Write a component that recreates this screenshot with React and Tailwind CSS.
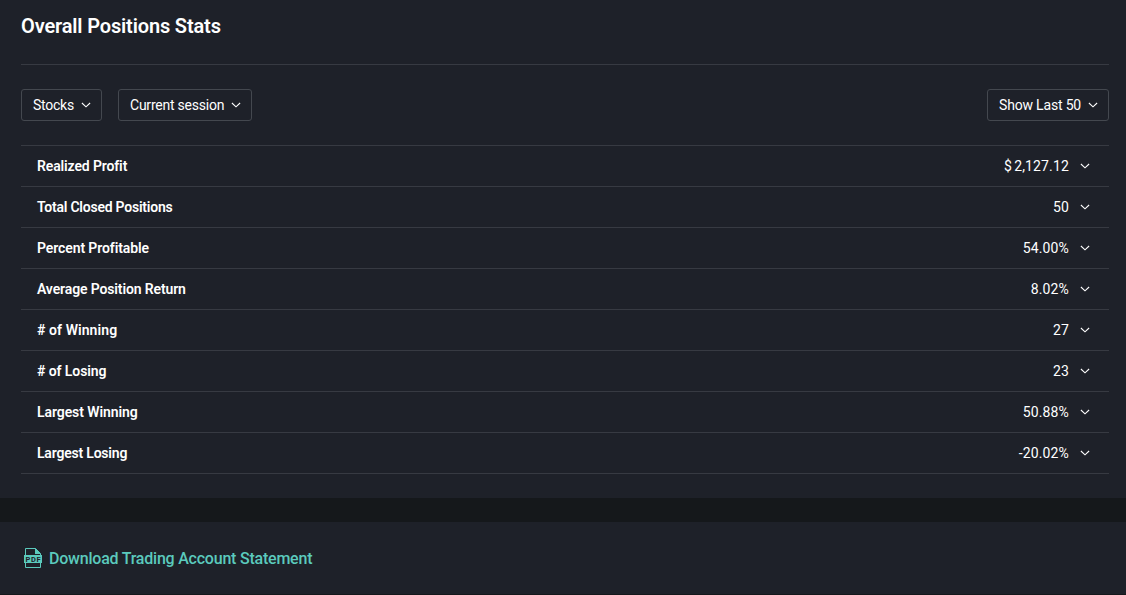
const stats = [
  { label: 'Realized Profit', value: '$ 2,127.12', tracking: 'tracking-[-0.13px]' },
  { label: 'Total Closed Positions', value: '50', tracking: 'tracking-[-0.23px]' },
  { label: 'Percent Profitable', value: '54.00%', tracking: 'tracking-[-0.1px]' },
  { label: 'Average Position Return', value: '8.02%', tracking: 'tracking-[-0.13px]' },
  { label: '# of Winning', value: '27', tracking: 'tracking-[0.08px]' },
  { label: '# of Losing', value: '23', tracking: 'tracking-[-0.08px]' },
  { label: 'Largest Winning', value: '50.88%', tracking: 'tracking-[-0.08px]' },
  { label: 'Largest Losing', value: '-20.02%', tracking: 'tracking-[-0.2px]' },
]

function Chevron() {
  return (
    <svg width="10" height="6" viewBox="0 0 10 6" fill="none" className="shrink-0" aria-hidden>
      <path d="M.9 1L5 4.8 9.1 1" stroke="currentColor" strokeWidth="1.1" />
    </svg>
  )
}

function Dropdown({ label, className }) {
  return (
    <button
      type="button"
      className={`flex h-8 items-center justify-between rounded-[3px] border border-[#44484f] pl-[11px] pr-2.5 text-sm whitespace-nowrap ${className}`}
    >
      <span>{label}</span>
      <Chevron />
    </button>
  )
}

function PdfIcon() {
  return (
    <svg width="18" height="20" viewBox="0 0 18 20" fill="none" className="shrink-0" aria-hidden>
      <path d="M1.5 7V.5h10l5 5V7M1.5 15v4.5h15V15" stroke="currentColor" />
      <path d="M11 0v6h6zM0 7h18v8H0z" fill="currentColor" />
      <text
        x="9"
        y="13.7"
        textAnchor="middle"
        textLength="15"
        className="fill-[#1e2129] text-[7.5px] font-bold"
      >
        PDF
      </text>
    </svg>
  )
}

export default function App() {
  return (
    <div className="flex h-screen flex-col overflow-hidden bg-[#15181b] font-['Roboto',sans-serif] text-white">
      <section className="h-[498px] shrink-0 bg-[#1e2129] pl-[21px] pr-[17px]">
        <header className="flex h-[65px] items-start border-b border-[#373a42] pt-3">
          <h1 className="text-xl leading-7 font-semibold tracking-[-0.15px]">Overall Positions Stats</h1>
        </header>

        <div className="flex gap-4 py-6">
          <Dropdown label="Stocks" className="w-[81px] tracking-[-0.25px]" />
          <Dropdown label="Current session" className="w-[134px] tracking-[-0.23px]" />
          <Dropdown label="Show Last 50" className="ml-auto w-[122px] tracking-[-0.18px]" />
        </div>

        <ul className="border-t border-[#373a42] text-sm">
          {stats.map((stat) => (
            <li
              key={stat.label}
              className="flex h-[41px] items-center justify-between border-b border-[#373a42] pl-4 pr-[19px]"
            >
              <span className={`font-semibold ${stat.tracking}`}>{stat.label}</span>
              <span
                className={`flex items-center gap-[11px] ${
                  stat.value.startsWith('$') ? '[word-spacing:-1.5px] tracking-[0.15px]' : 'tracking-[0.15px]'
                }`}
              >
                {stat.value}
                <Chevron />
              </span>
            </li>
          ))}
        </ul>
      </section>

      <section className="mt-6 flex h-[72px] shrink-0 items-center bg-[#1e2129] pl-6">
        <a
          href="#statement"
          className="flex items-center gap-[7px] text-base font-medium tracking-[-0.22px] text-[#5bcabd]"
        >
          <PdfIcon />
          <span className="pt-0.5">Download Trading Account Statement</span>
        </a>
      </section>
    </div>
  )
}
